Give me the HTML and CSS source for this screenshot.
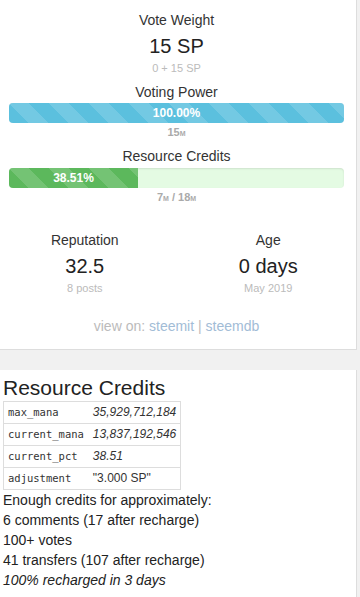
FILE: index.html
```html
<!DOCTYPE html>
<html lang="en">
<head>
    <meta charset="UTF-8">
    <meta name="viewport" content="width=device-width, initial-scale=1.0">
    <title>Account Stats</title>
    <link rel="stylesheet" href="styles.css">
</head>
<body>
    <div class="panel stats">
        <div class="stat">
            <div class="stat-label">Vote Weight</div>
            <div class="stat-value">15 SP</div>
            <div class="stat-sub">0 + 15 SP</div>
        </div>

        <div class="stat spaced">
            <div class="stat-label">Voting Power</div>
            <div class="progress">
                <div class="progress-bar info" style="width: 100%">100.00%</div>
            </div>
            <div class="stat-sub strong">15<small>M</small></div>
        </div>

        <div class="stat spaced">
            <div class="stat-label">Resource Credits</div>
            <div class="progress rc">
                <div class="progress-bar success" style="width: 38.51%">38.51%</div>
            </div>
            <div class="stat-sub strong">7<small>M</small> / 18<small>M</small></div>
        </div>

        <div class="row">
            <div class="stat">
                <div class="stat-label">Reputation</div>
                <div class="stat-value">32.5</div>
                <div class="stat-sub">8 posts</div>
            </div>
            <div class="stat">
                <div class="stat-label">Age</div>
                <div class="stat-value">0 days</div>
                <div class="stat-sub">May 2019</div>
            </div>
        </div>

        <div class="view-on">
            view on: <a href="#">steemit</a> | <a href="#">steemdb</a>
        </div>
    </div>

    <div class="panel details">
        <h3>Resource Credits</h3>
        <table class="rc-table">
            <tr><td class="key">max_mana</td><td class="num">35,929,712,184</td></tr>
            <tr><td class="key">current_mana</td><td class="num">13,837,192,546</td></tr>
            <tr><td class="key">current_pct</td><td class="num">38.51</td></tr>
            <tr><td class="key">adjustment</td><td>"3.000 SP"</td></tr>
        </table>
        <div class="estimate">
            <div>Enough credits for approximately:</div>
            <div>6 comments (17 after recharge)</div>
            <div>100+ votes</div>
            <div>41 transfers (107 after recharge)</div>
            <div class="recharge">100% recharged in 3 days</div>
        </div>
    </div>
</body>
</html>
```

FILE: styles.css
```css
body {
    font-family: "Liberation Sans", Arial, sans-serif;
    margin: 0;
    padding: 0;
    background-color: #f1f1f1;
    color: #333;
}

.panel {
    background-color: #fff;
    border-right: 1px solid #ddd;
    border-bottom: 1px solid #ddd;
    margin-right: 3px;
}

.stats {
    padding: 10px 12px 13px 9px;
    text-align: center;
}

.stat-label {
    font-size: 14px;
    line-height: 20px;
}

.stat-value {
    font-size: 20px;
    line-height: 22px;
    margin-top: 5px;
    color: #222;
}

.stat-sub {
    font-size: 11px;
    line-height: 16px;
    margin-top: 3px;
    color: #bbb;
}

.stat-sub.strong {
    font-weight: bold;
    margin-top: 1px;
    color: #aaa;
}

.stat-sub small {
    font-size: 7px;
    line-height: 1;
}

.spaced {
    margin-top: 6px;
}

.progress {
    height: 20px;
    margin-top: 1px;
    background-color: #f5f5f5;
    border-radius: 4px;
    overflow: hidden;
    display: flex;
    box-shadow: inset 0 1px 2px rgba(0, 0, 0, 0.1);
}

.progress.rc {
    margin-top: 2px;
    background-color: #e4fbe3;
}

.progress-bar {
    color: #fff;
    font-size: 12px;
    font-weight: bold;
    line-height: 20px;
    text-align: center;
    background-image: linear-gradient(45deg,
        rgba(255, 255, 255, 0.15) 25%, transparent 25%,
        transparent 50%, rgba(255, 255, 255, 0.15) 50%,
        rgba(255, 255, 255, 0.15) 75%, transparent 75%, transparent);
    background-size: 40px 40px;
}

.progress-bar.info {
    background-color: #5bc0de;
}

.progress-bar.success {
    background-color: #5cb85c;
}

.row {
    display: grid;
    grid-template-columns: 1fr 1fr;
    margin: 25px -16px 0;
}

.view-on {
    margin-top: 20px;
    font-size: 14px;
    line-height: 20px;
    color: #bbb;
}

.view-on a {
    color: #a2bcd6;
    text-decoration: none;
}

.details {
    margin-top: 20px;
    padding: 6px 0 20px 3px;
}

.details h3 {
    margin: 0 0 1px;
    font-size: 21px;
    font-weight: normal;
    line-height: 24px;
    color: #222;
}

.rc-table {
    border-collapse: collapse;
    border: 1px solid #ddd;
    font-size: 12px;
}

.rc-table td {
    border-top: 1px solid #ddd;
    padding: 3px 4px;
    line-height: 15px;
}

.rc-table .key {
    font-family: "DejaVu Sans Mono", monospace;
    font-size: 10.5px;
    padding-right: 5px;
}

.rc-table .num {
    font-style: italic;
}

.estimate {
    font-size: 14px;
    line-height: 20px;
    color: #222;
}

.recharge {
    font-style: italic;
}
```
